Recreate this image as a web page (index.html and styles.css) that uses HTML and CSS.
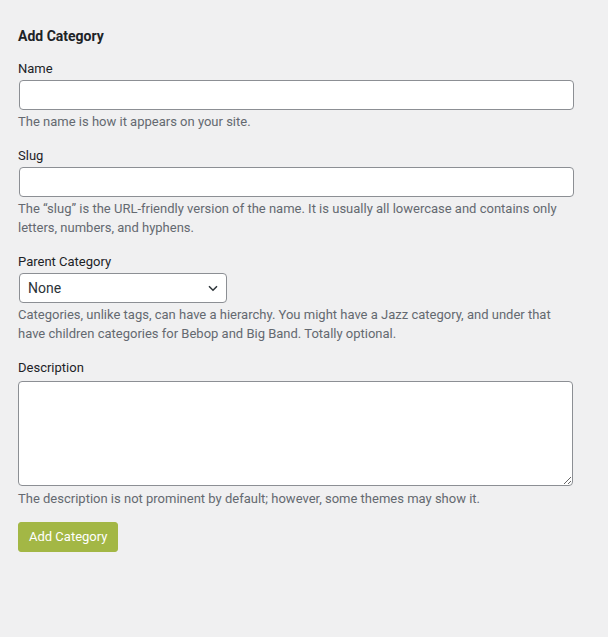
FILE: index.html
```html
<!DOCTYPE html>
<html lang="en">
<head>
<meta charset="utf-8">
<title>Add Category</title>
<link rel="stylesheet" href="styles.css">
</head>
<body>
<div class="wrap">
  <h2 class="title">Add Category</h2>
  <form class="form">
    <div class="field">
      <label class="label" for="tag-name">Name</label>
      <input class="text-input" id="tag-name" type="text">
      <p class="desc">The name is how it appears on your site.</p>
    </div>
    <div class="field">
      <label class="label" for="tag-slug">Slug</label>
      <input class="text-input" id="tag-slug" type="text">
      <p class="desc">The “slug” is the URL-friendly version of the name. It is usually all lowercase and contains only letters, numbers, and hyphens.</p>
    </div>
    <div class="field">
      <label class="label" for="parent">Parent Category</label>
      <div class="select-wrap">
        <select class="select" id="parent"><option>None</option></select>
        <svg class="chevron" width="14" height="14" viewBox="0 0 14 14" aria-hidden="true"><path d="M3 5.2l4 4 4-4" fill="none" stroke="#2c3338" stroke-width="1.5"/></svg>
      </div>
      <p class="desc">Categories, unlike tags, can have a hierarchy. You might have a Jazz category, and under that have children categories for Bebop and Big Band. Totally optional.</p>
    </div>
    <div class="field field-last">
      <label class="label" for="tag-description">Description</label>
      <textarea class="textarea" id="tag-description"></textarea>
      <p class="desc desc-after-area">The description is not prominent by default; however, some themes may show it.</p>
    </div>
    <button class="button" type="button">Add Category</button>
  </form>
</div>
</body>
</html>
```

FILE: styles.css
```css
html, body {
  margin: 0;
  padding: 0;
  background: #f0f0f1;
}
body {
  font-family: Roboto, "Liberation Sans", Arial, sans-serif;
  font-size: 13px;
  line-height: 19px;
  color: #1d2327;
}
.wrap {
  width: 556px;
  padding: 27px 0 0 18px;
}
.title {
  margin: 0 0 13px;
  font-size: 14px;
  line-height: 19px;
  font-weight: 700;
  color: #1d2327;
}
.form {
  margin: 0;
}
.field {
  margin: 0 0 15px;
}
.field-last {
  margin-bottom: 14px;
}
.label {
  display: block;
  margin: 0 0 2px;
  color: #1d2327;
}
.text-input {
  display: block;
  box-sizing: border-box;
  width: 555px;
  height: 30px;
  margin: 0 0 0 1px;
  padding: 0 8px;
  border: 1px solid #8c8f94;
  border-radius: 4px;
  background: #fff;
  font: 14px Roboto, "Liberation Sans", sans-serif;
  color: #2c3338;
  outline: none;
}
.desc {
  margin: 2px 0 0;
  color: #646970;
  font-size: 13px;
  line-height: 19px;
}
.desc-after-area {
  margin-top: 3px;
}
.select-wrap {
  position: relative;
  width: 208px;
  margin-left: 1px;
}
.select {
  display: block;
  box-sizing: border-box;
  width: 208px;
  height: 30px;
  margin: 0;
  padding: 0 24px 0 8px;
  border: 1px solid #8c8f94;
  border-radius: 4px;
  background: #fff;
  font: 14px Roboto, "Liberation Sans", sans-serif;
  color: #2c3338;
  -webkit-appearance: none;
  appearance: none;
  outline: none;
}
.chevron {
  position: absolute;
  right: 7px;
  top: 8px;
  pointer-events: none;
}
.textarea {
  display: block;
  box-sizing: border-box;
  width: 555px;
  height: 105px;
  margin: 4px 0 0;
  padding: 2px 6px;
  border: 1px solid #8c8f94;
  border-radius: 4px;
  background: #fff;
  font: 14px Roboto, "Liberation Sans", sans-serif;
  color: #2c3338;
  outline: none;
}
.button {
  display: block;
  box-sizing: border-box;
  height: 30px;
  margin: 0;
  padding: 0 10px;
  border: 1px solid #a3b745;
  border-radius: 3px;
  background: #a3b745;
  color: #fff;
  font: 13px Roboto, "Liberation Sans", sans-serif;
  line-height: 28px;
  cursor: pointer;
}
```
